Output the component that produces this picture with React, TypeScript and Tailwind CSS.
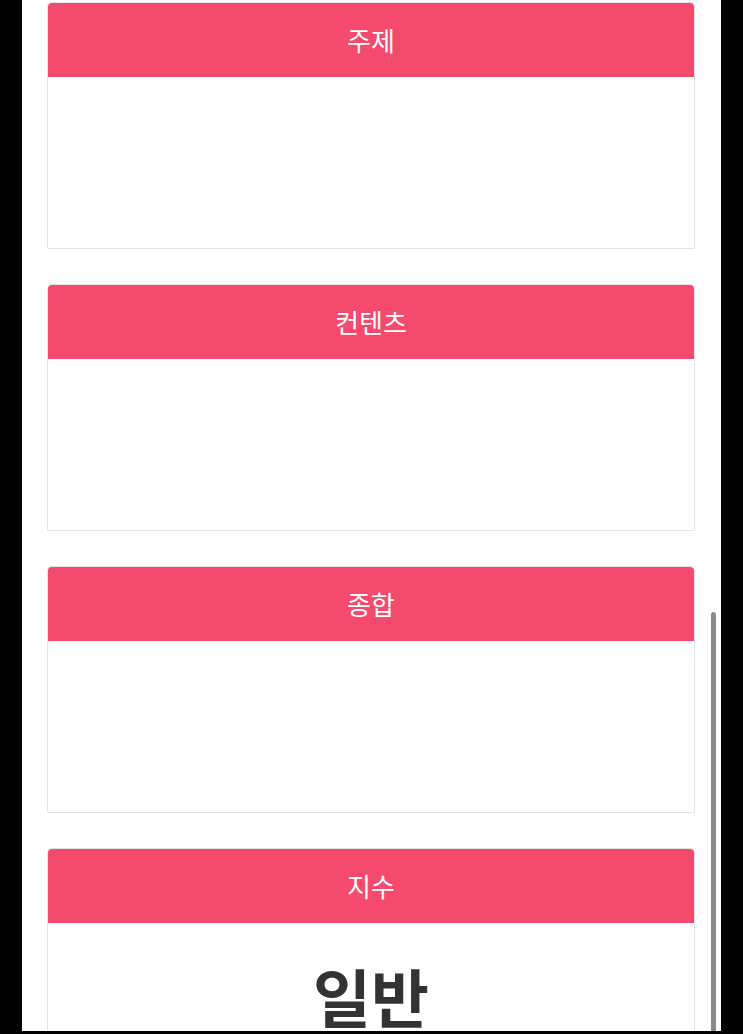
export default function App() {
  const cards = ["주제", "컨텐츠", "종합", "지수"];

  return (
    <div
      className="relative w-[743px] h-[1034px] overflow-hidden bg-black"
      style={{ fontFamily: '"Noto Sans CJK KR", "Noto Sans", sans-serif' }}
    >
      <div className="absolute left-[22px] top-0 w-[699px] h-[1031px] bg-white overflow-hidden">
        <div className="flex flex-col gap-[35px] pt-[2px] pl-[25px] w-[673px]">
          {cards.map((title, i) => (
            <div
              key={title}
              className="h-[247px] shrink-0 border border-[#e3e3e3] rounded-t-[5px] overflow-hidden flex flex-col"
            >
              <div className="h-[74px] shrink-0 bg-[#f44a6e] flex items-center justify-center text-white text-[26px] leading-none pb-[1px]">
                {title}
              </div>
              <div className="flex-1 bg-white flex justify-center">
                {i === 3 && (
                  <p className="mt-[40px] text-[63px] font-bold text-[#333333] leading-none">
                    일반
                  </p>
                )}
              </div>
            </div>
          ))}
        </div>
        {/* scrollbar */}
        <div className="absolute left-[689px] top-[612px] w-[5px] h-[430px] rounded-full bg-[#8a8a8a]" />
      </div>
    </div>
  );
}
